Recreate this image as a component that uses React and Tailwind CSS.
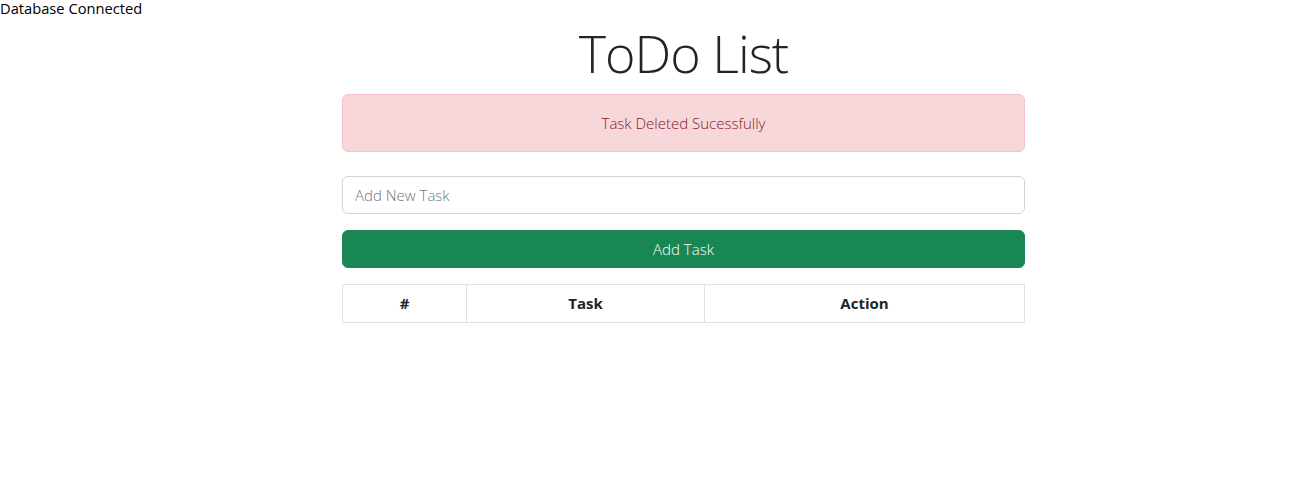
export default function App() {
  return (
    <div className="min-h-[486px] bg-white text-[#212529]" style={{ fontFamily: '"Open Sans", "Noto Sans", sans-serif' }}>
      <div className="text-[14.7px] leading-[16px] text-black">Database Connected</div>
      <div className="ml-[342px] w-[683px]">
        <h1 className="mt-[6px] mb-[10px] text-center text-[52px] font-light leading-[62px] tracking-[-1px]">ToDo List</h1>
        <div className="mb-[24px] flex h-[58px] items-center justify-center rounded-[6px] border border-[#f5c2c7] bg-[#f8d7da] text-[15px] font-light text-[#842029]">
          Task Deleted Sucessfully
        </div>
        <input
          type="text"
          placeholder="Add New Task"
          className="block h-[38px] w-full rounded-[6px] border border-[#ced4da] bg-white px-3 text-[15px] font-light text-[#212529] outline-none placeholder:text-[#6c757d]"
        />
        <button className="mt-[16px] block h-[38px] w-full rounded-[6px] border border-[#198754] bg-[#198754] text-[15px] font-light text-white">
          Add Task
        </button>
        <table className="mt-[16px] w-full border-collapse text-[15px]">
          <thead>
            <tr className="h-[38px]">
              <th className="w-[124px] border border-[#dee2e6] font-bold">#</th>
              <th className="w-[238px] border border-[#dee2e6] font-bold">Task</th>
              <th className="border border-[#dee2e6] font-bold">Action</th>
            </tr>
          </thead>
          <tbody></tbody>
        </table>
      </div>
    </div>
  );
}
